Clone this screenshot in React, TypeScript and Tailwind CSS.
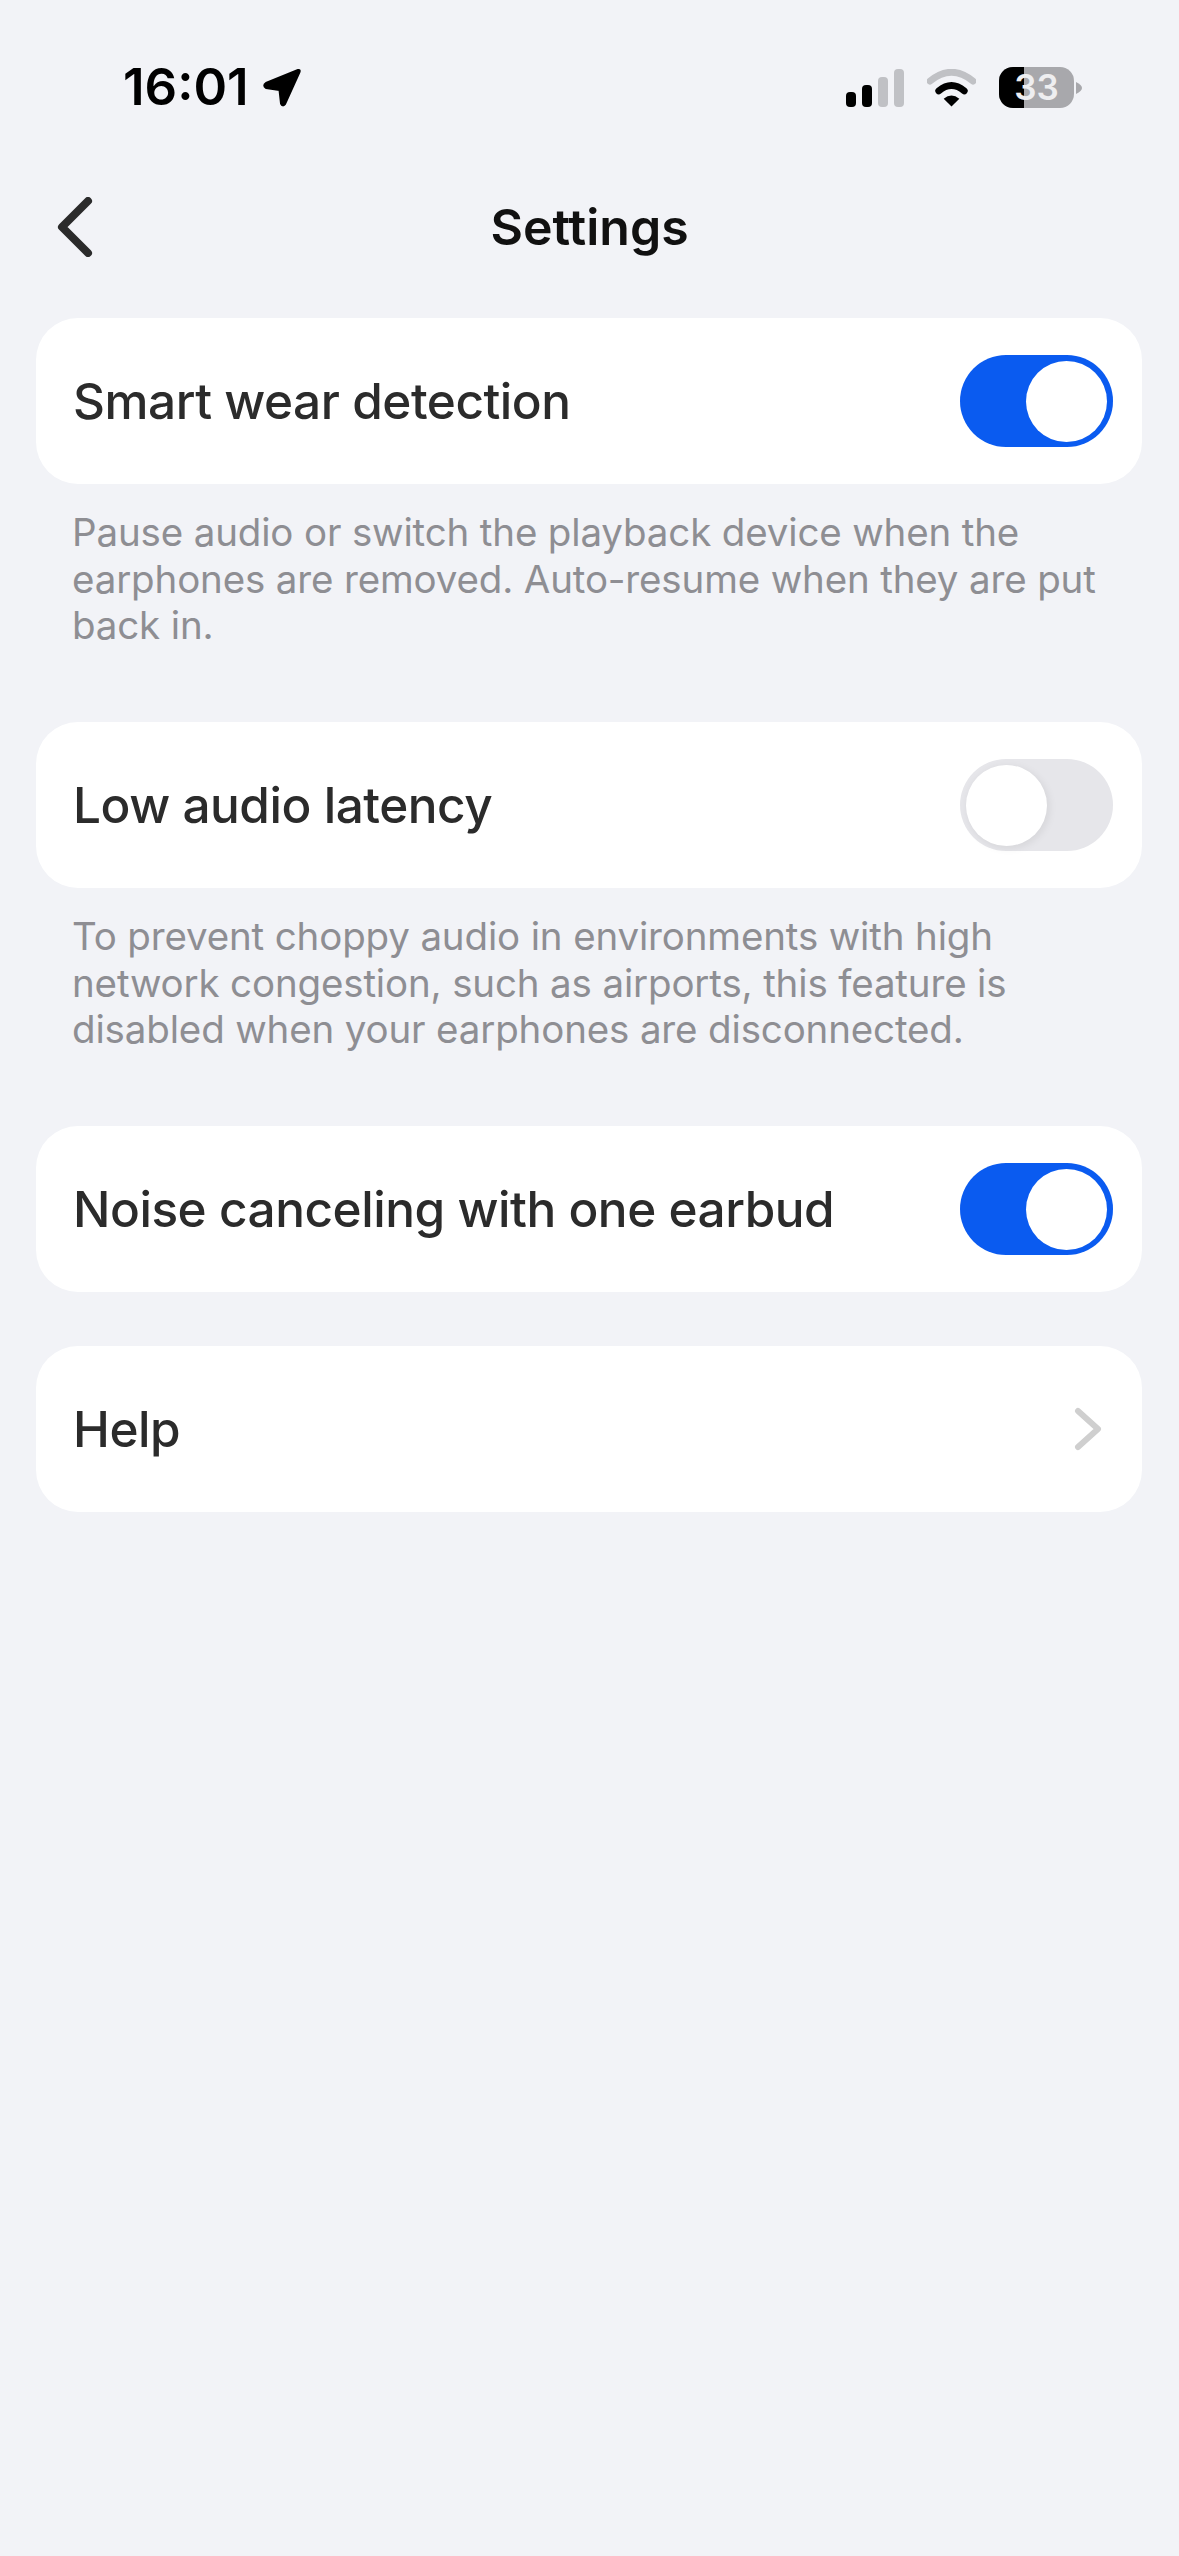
const font = "font-['Inter',sans-serif]"

function Toggle({ on }: { on: boolean }) {
  return (
    <div className={`flex h-[92px] w-[153px] items-center rounded-full p-[6px] ${on ? 'justify-end bg-[#0a5bf0]' : 'justify-start bg-[#e6e6ea]'}`}>
      <div className={`h-[81px] w-[81px] rounded-full bg-white ${on ? '' : 'shadow-[2px_2px_8px_rgba(0,0,0,0.08)]'}`} />
    </div>
  )
}

function Card({ label, children }: { label: string; children: React.ReactNode }) {
  return (
    <div className="flex h-[166px] items-center justify-between rounded-[42px] bg-white pl-[37px] pr-[29px]">
      <span className="pt-[2px] text-[49.5px] font-[450] leading-none tracking-[-0.47px] text-[#2b2b2b]">{label}</span>
      {children}
    </div>
  )
}

function Note({ children }: { children: React.ReactNode }) {
  return <p className="mt-[25px] mb-[73.5px] pl-[36px] pr-[29px] text-[38.5px] leading-[46.5px] tracking-[-0.15px] text-[#8e8e93]">{children}</p>
}

function StatusBar() {
  return (
    <div className="flex h-[170px] items-start justify-between pl-[123px] pr-[97px] pt-[62px]">
      <div className="flex items-center gap-[13px]">
        <span className="text-[51px] font-semibold leading-[50px] text-black">16:01</span>
        <svg width="40" height="41" viewBox="0 0 40 41">
          <path d="M4 16 L36 3 Q38.5 2.5 37.5 5 L23 37 Q20.5 40 19 36.5 L17.5 23 L4 21 Q0.5 18.5 4 16 Z" fill="#000" stroke="#000" strokeWidth="2" strokeLinejoin="round" />
        </svg>
      </div>
      <div className="mt-[5px] flex items-center gap-[23px]">
        <svg width="58" height="38" viewBox="0 0 58 38">
          <rect x="0" y="23" width="10" height="15" rx="4" fill="#000" />
          <rect x="16" y="16" width="10" height="22" rx="4" fill="#000" />
          <rect x="32" y="8" width="10" height="30" rx="4" fill="#c0c1c5" />
          <rect x="48" y="0" width="10" height="38" rx="4" fill="#c0c1c5" />
        </svg>
        <svg width="49" height="38" viewBox="0 0 50 38">
          <path d="M3 12 Q25 -6 47 12" fill="none" stroke="#c0c1c5" strokeWidth="7" strokeLinecap="round" />
          <path d="M12 22 Q25 11 38 22" fill="none" stroke="#000" strokeWidth="7" strokeLinecap="round" />
          <path d="M17 30 Q25 23.5 33 30 L25 38 Z" fill="#000" />
        </svg>
        <div className="flex items-center gap-[2px]">
          <div className="relative h-[41px] w-[75px] overflow-hidden rounded-[14px] bg-[#a8a8ac]">
            <div className="h-full w-[25px] bg-black" />
            <span className="absolute inset-0 flex items-center justify-center text-[35px] font-semibold leading-none text-[#eeeef0]">33</span>
          </div>
          <svg width="6" height="12" viewBox="0 0 6 12">
            <path d="M0 0 Q6 3 6 6 Q6 9 0 12 Z" fill="#a8a8ac" />
          </svg>
        </div>
      </div>
    </div>
  )
}

export default function App() {
  return (
    <div className={`min-h-[2556px] bg-[#f2f3f7] ${font}`}>
      <StatusBar />

      <div className="flex h-[114px] items-center justify-between px-[57px]">
        <svg width="36" height="60" viewBox="0 0 36 60">
          <path d="M31 4 L5 30 L31 56" fill="none" stroke="#2b2b2b" strokeWidth="8" strokeLinecap="round" strokeLinejoin="round" />
        </svg>
        <h1 className="text-[50px] font-semibold leading-none text-[#111]">Settings</h1>
        <div className="w-[36px]" />
      </div>

      <div className="mt-[34px] pl-[36px] pr-[37px]">
        <Card label="Smart wear detection"><Toggle on /></Card>
        <Note>Pause audio or switch the playback device when the earphones are removed. Auto-resume when they are put back in.</Note>
        <Card label="Low audio latency"><Toggle on={false} /></Card>
        <Note>To prevent choppy audio in environments with high network congestion, such as airports, this feature is disabled when your earphones are disconnected.</Note>
        <Card label="Noise canceling with one earbud"><Toggle on /></Card>
        <div className="mt-[54px]">
          <Card label="Help">
            <svg width="28" height="44" viewBox="0 0 28 44" className="mr-[11px]">
              <path d="M4 4 L24 22 L4 40" fill="none" stroke="#cfcfcf" strokeWidth="6" strokeLinecap="round" strokeLinejoin="round" />
            </svg>
          </Card>
        </div>
      </div>
    </div>
  )
}
